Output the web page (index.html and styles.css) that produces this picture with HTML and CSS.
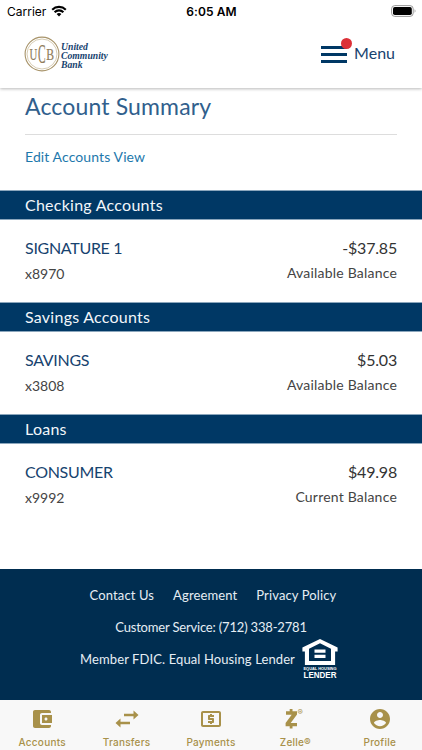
FILE: index.html
```html
<!DOCTYPE html>
<html lang="en">
<head>
    <meta charset="utf-8">
    <meta name="viewport" content="width=device-width, initial-scale=1">
    <title>Account Summary</title>
    <link rel="stylesheet" href="styles.css">
</head>
<body>
    <header class="header">
        <div class="status-bar">
            <div class="carrier">
                <span>Carrier</span>
                <svg width="16" height="12" viewBox="0 0 16 12">
                    <path d="M1.2 4.7a9.7 9.7 0 0 1 13.6 0M3.6 7.2a6.2 6.2 0 0 1 8.8 0" fill="none" stroke="#000" stroke-width="2.1"/>
                    <path d="M8 11.5L5.6 9.1a3.4 3.4 0 0 1 4.8 0z"/>
                </svg>
            </div>
            <span class="time">6:05 AM</span>
            <svg class="battery" width="25" height="12" viewBox="0 0 25 12">
                <rect x=".6" y=".6" width="21.6" height="10.8" rx="3.2" fill="#fff" stroke="#999" stroke-width="1"/>
                <rect x="2" y="2" width="18.8" height="8" rx="1.8"/>
                <path d="M23.6 4.2v3.6c1.2-.6 1.2-3 0-3.6z" fill="#999"/>
            </svg>
        </div>
        <div class="brand-bar">
            <div class="logo">
                <svg width="36" height="36" viewBox="0 0 36 36">
                    <circle cx="18" cy="18" r="16.9" fill="none" stroke="#a8946a" stroke-width="1.1"/>
                    <circle cx="18" cy="18" r="15" fill="none" stroke="#c4b693" stroke-width=".7"/>
                    <g class="seal" fill="#8f7c5c" stroke="#8f7c5c" stroke-width=".2">
                        <text x="5.4" y="23.500" font-size="17" textLength="7.8" lengthAdjust="spacingAndGlyphs">U</text>
                        <text x="13.9" y="27" font-size="27" textLength="7.6" lengthAdjust="spacingAndGlyphs">C</text>
                        <text x="22.200" y="23.500" font-size="17" textLength="7.8" lengthAdjust="spacingAndGlyphs">B</text>
                    </g>
                </svg>
                <div class="logo-name">United<br>Community<br>Bank</div>
            </div>
            <div class="menu">
                <div class="menu-icon">
                    <span></span><span></span><span></span>
                    <i class="badge"></i>
                </div>
                <span class="menu-label">Menu</span>
            </div>
        </div>
    </header>

    <main class="content">
        <div class="intro">
            <h1>Account Summary</h1>
            <a class="edit-link">Edit Accounts View</a>
        </div>

        <h2>Checking Accounts</h2>
        <div class="account">
            <div>
                <div class="name">SIGNATURE 1</div>
                <div class="number">x8970</div>
            </div>
            <div class="right">
                <div class="amount">-$37.85</div>
                <div class="balance">Available Balance</div>
            </div>
        </div>

        <h2>Savings Accounts</h2>
        <div class="account">
            <div>
                <div class="name">SAVINGS</div>
                <div class="number">x3808</div>
            </div>
            <div class="right">
                <div class="amount">$5.03</div>
                <div class="balance">Available Balance</div>
            </div>
        </div>

        <h2>Loans</h2>
        <div class="account">
            <div>
                <div class="name">CONSUMER</div>
                <div class="number">x9992</div>
            </div>
            <div class="right">
                <div class="amount">$49.98</div>
                <div class="balance">Current Balance</div>
            </div>
        </div>
    </main>

    <footer class="footer">
        <div class="links">
            <a>Contact Us</a>
            <a>Agreement</a>
            <a>Privacy Policy</a>
        </div>
        <div class="service">Customer Service: (712) 338-2781</div>
        <div class="member">
            <span>Member FDIC. Equal Housing Lender</span>
            <svg width="36" height="40" viewBox="0 0 36 40" fill="#fff">
                <path fill-rule="evenodd" d="M18 0L.4 8.500v4h2.500v13.600h30.200V12.500h2.500v-4zM18 4.300l11 5.400v12.400H7V9.700z"/>
                <path d="M12.500 10.500h11v3.200h-11zM12.500 15.700h11v3.200h-11z"/>
                <text x="1.500" y="30.800" font-size="4.300" textLength="33" lengthAdjust="spacingAndGlyphs">EQUAL HOUSING</text>
                <text x="1.500" y="38.600" font-size="8.400" textLength="33" lengthAdjust="spacingAndGlyphs">LENDER</text>
            </svg>
        </div>
    </footer>

    <nav class="tabs">
        <a class="tab">
            <svg width="24" height="24" viewBox="0 0 24 24"><path d="M21 18v1c0 1.100-.9 2-2 2H5c-1.110 0-2-.9-2-2V5c0-1.100.89-2 2-2h14c1.100 0 2 .9 2 2v1h-9c-1.110 0-2 .9-2 2v8c0 1.100.89 2 2 2h9zm-9-2h10V8H12v8zm4-2.500c-.83 0-1.500-.67-1.500-1.500s.67-1.500 1.500-1.500 1.500.67 1.500 1.500-.67 1.500-1.500 1.500z"/></svg>
            <span>Accounts</span>
        </a>
        <a class="tab">
            <svg width="26" height="24" viewBox="0 0 26 24"><path d="M19.500 3.500l5 4.500-5 4.500V9.300H10V6.700h9.500zM6.500 11.500l-5 4.500 5 4.500v-3.200H16v-2.600H6.500z"/></svg>
            <span>Transfers</span>
        </a>
        <a class="tab">
            <svg width="24" height="24" viewBox="0 0 24 24"><path d="M11 17h2v-1h1c.55 0 1-.45 1-1v-3c0-.55-.45-1-1-1h-3v-1h4V8h-2V7h-2v1h-1c-.55 0-1 .45-1 1v3c0 .55.45 1 1 1h3v1H9v2h2v1zm9-13H4c-1.110 0-1.990.89-1.990 2L2 18c0 1.110.89 2 2 2h16c1.110 0 2-.89 2-2V6c0-1.110-.89-2-2-2zm0 14H4V6h16v12z"/></svg>
            <span>Payments</span>
        </a>
        <a class="tab">
            <svg width="24" height="24" viewBox="0 0 24 24">
                <path d="M6.700 2h2.800v2.200h4.500v3.200L7.700 15.900H14v3.400H9.500v2.300H6.700v-2.300H2.600v-3.200L8.700 7.700H3V4.200h3.700z"/>
                <text x="14.600" y="7.800" font-size="8">®</text>
            </svg>
            <span>Zelle®</span>
        </a>
        <a class="tab">
            <svg width="24" height="24" viewBox="0 0 24 24"><path d="M12 2C6.480 2 2 6.480 2 12s4.480 10 10 10 10-4.480 10-10S17.520 2 12 2zm0 3c1.660 0 3 1.340 3 3s-1.340 3-3 3-3-1.340-3-3 1.340-3 3-3zm0 14.200c-2.500 0-4.710-1.280-6-3.220.03-1.990 4-3.080 6-3.080 1.990 0 5.970 1.090 6 3.080-1.290 1.940-3.500 3.220-6 3.220z"/></svg>
            <span>Profile</span>
        </a>
    </nav>
</body>
</html>
```

FILE: styles.css
```css
* {
    box-sizing: border-box;
}

body {
    margin: 0;
    height: 750px;
    display: flex;
    flex-direction: column;
    font-family: Lato, sans-serif;
    background: #fff;
    color: #444;
    overflow: hidden;
}

.header {
    height: 88px;
    flex: none;
    background: #fff;
    box-shadow: 0 1px 3px rgba(0,0,0,0.28);
}

.status-bar {
    height: 22px;
    padding: 0 6px 0 7px;
    display: grid;
    grid-template-columns: 1fr auto 1fr;
    align-items: center;
    font-family: Inter, sans-serif;
    font-size: 12px;
    color: #000;
}

.carrier {
    display: flex;
    align-items: center;
    gap: 5px;
}

.time {
    font-weight: 600;
    letter-spacing: 0.1px;
}

.battery {
    justify-self: end;
}

.brand-bar {
    height: 66px;
    padding: 0 27px 2px 24px;
    display: flex;
    justify-content: space-between;
    align-items: center;
}

.logo {
    display: flex;
    align-items: center;
    gap: 1px;
}

.seal {
    font-family: "Liberation Serif", serif;
}

.logo-name {
    padding-top: 3px;
    font: italic bold 9.7px/9.3px "Liberation Serif", serif;
    color: #17436f;
}

.menu {
    display: flex;
    align-items: center;
    gap: 7px;
    color: #17436f;
}

.menu-icon {
    position: relative;
    width: 26px;
    display: grid;
    gap: 4px;
}

.menu-icon span {
    height: 3px;
    background: #003865;
}

.badge {
    position: absolute;
    top: -8px;
    right: -5px;
    width: 11px;
    height: 11px;
    border-radius: 50%;
    background: #dc3037;
}

.menu-label {
    font-size: 16px;
    line-height: 20px;
    padding-bottom: 2px;
}

.content {
    height: 481px;
    flex: none;
}

.intro {
    height: 102px;
    padding: 0 25px;
}

h1 {
    margin: 0 0 12px;
    height: 47px;
    padding-top: 3px;
    border-bottom: 1px solid #ddd;
    font-size: 23px;
    line-height: 30px;
    font-weight: normal;
    letter-spacing: 0.15px;
    color: #315f8d;
}

.edit-link {
    display: block;
    font-size: 14px;
    line-height: 20px;
    letter-spacing: 0.1px;
    color: #1d78ac;
}

h2 {
    margin: 0;
    height: 30px;
    padding-left: 25px;
    border: 1px solid #8ba6bc;
    border-width: 1px 0;
    background: #003865;
    background-clip: padding-box;
    font-size: 16px;
    line-height: 27px;
    font-weight: normal;
    letter-spacing: 0.25px;
    color: #f2f6fa;
}

.account {
    height: 82px;
    padding: 17px 25px 0;
    display: flex;
    justify-content: space-between;
}

.name {
    font-size: 16px;
    line-height: 22px;
    letter-spacing: -0.3px;
    color: #17436f;
}

.number {
    padding-top: 5px;
    font-size: 14px;
    line-height: 20px;
}

.right {
    text-align: right;
}

.amount {
    font-size: 16px;
    line-height: 22px;
    letter-spacing: -0.2px;
    color: #333;
}

.balance {
    padding-top: 4px;
    font-size: 14px;
    line-height: 20px;
    letter-spacing: 0.2px;
}

.footer {
    height: 131px;
    flex: none;
    padding-top: 16px;
    background: #002d50;
    color: #e6edf4;
    font-size: 13px;
    line-height: 20px;
}

.links {
    display: flex;
    justify-content: center;
    gap: 19px;
    padding-left: 4px;
    letter-spacing: 0.12px;
}

.service {
    margin-top: 12px;
    text-align: center;
    letter-spacing: -0.18px;
}

.member {
    height: 40px;
    margin-top: 2px;
    display: flex;
    justify-content: center;
    align-items: center;
    gap: 7px;
    padding-right: 4px;
    letter-spacing: 0.1px;
}

.member svg {
    letter-spacing: 0;
    overflow: visible;
}

.member text {
    font-family: "Liberation Sans", sans-serif;
    font-weight: bold;
}

.tabs {
    height: 50px;
    flex: none;
    display: grid;
    grid-template-columns: repeat(5, 1fr);
    background: #f8f8f8;
    color: #a8914a;
}

.tab {
    padding-top: 7px;
    display: flex;
    flex-direction: column;
    align-items: center;
    font-family: Inter, sans-serif;
    font-size: 10px;
    line-height: 14px;
    font-weight: 500;
    letter-spacing: 0.25px;
}

.tab span {
    margin-top: 4px;
}

.tab svg {
    fill: #a8914a;
}
```
